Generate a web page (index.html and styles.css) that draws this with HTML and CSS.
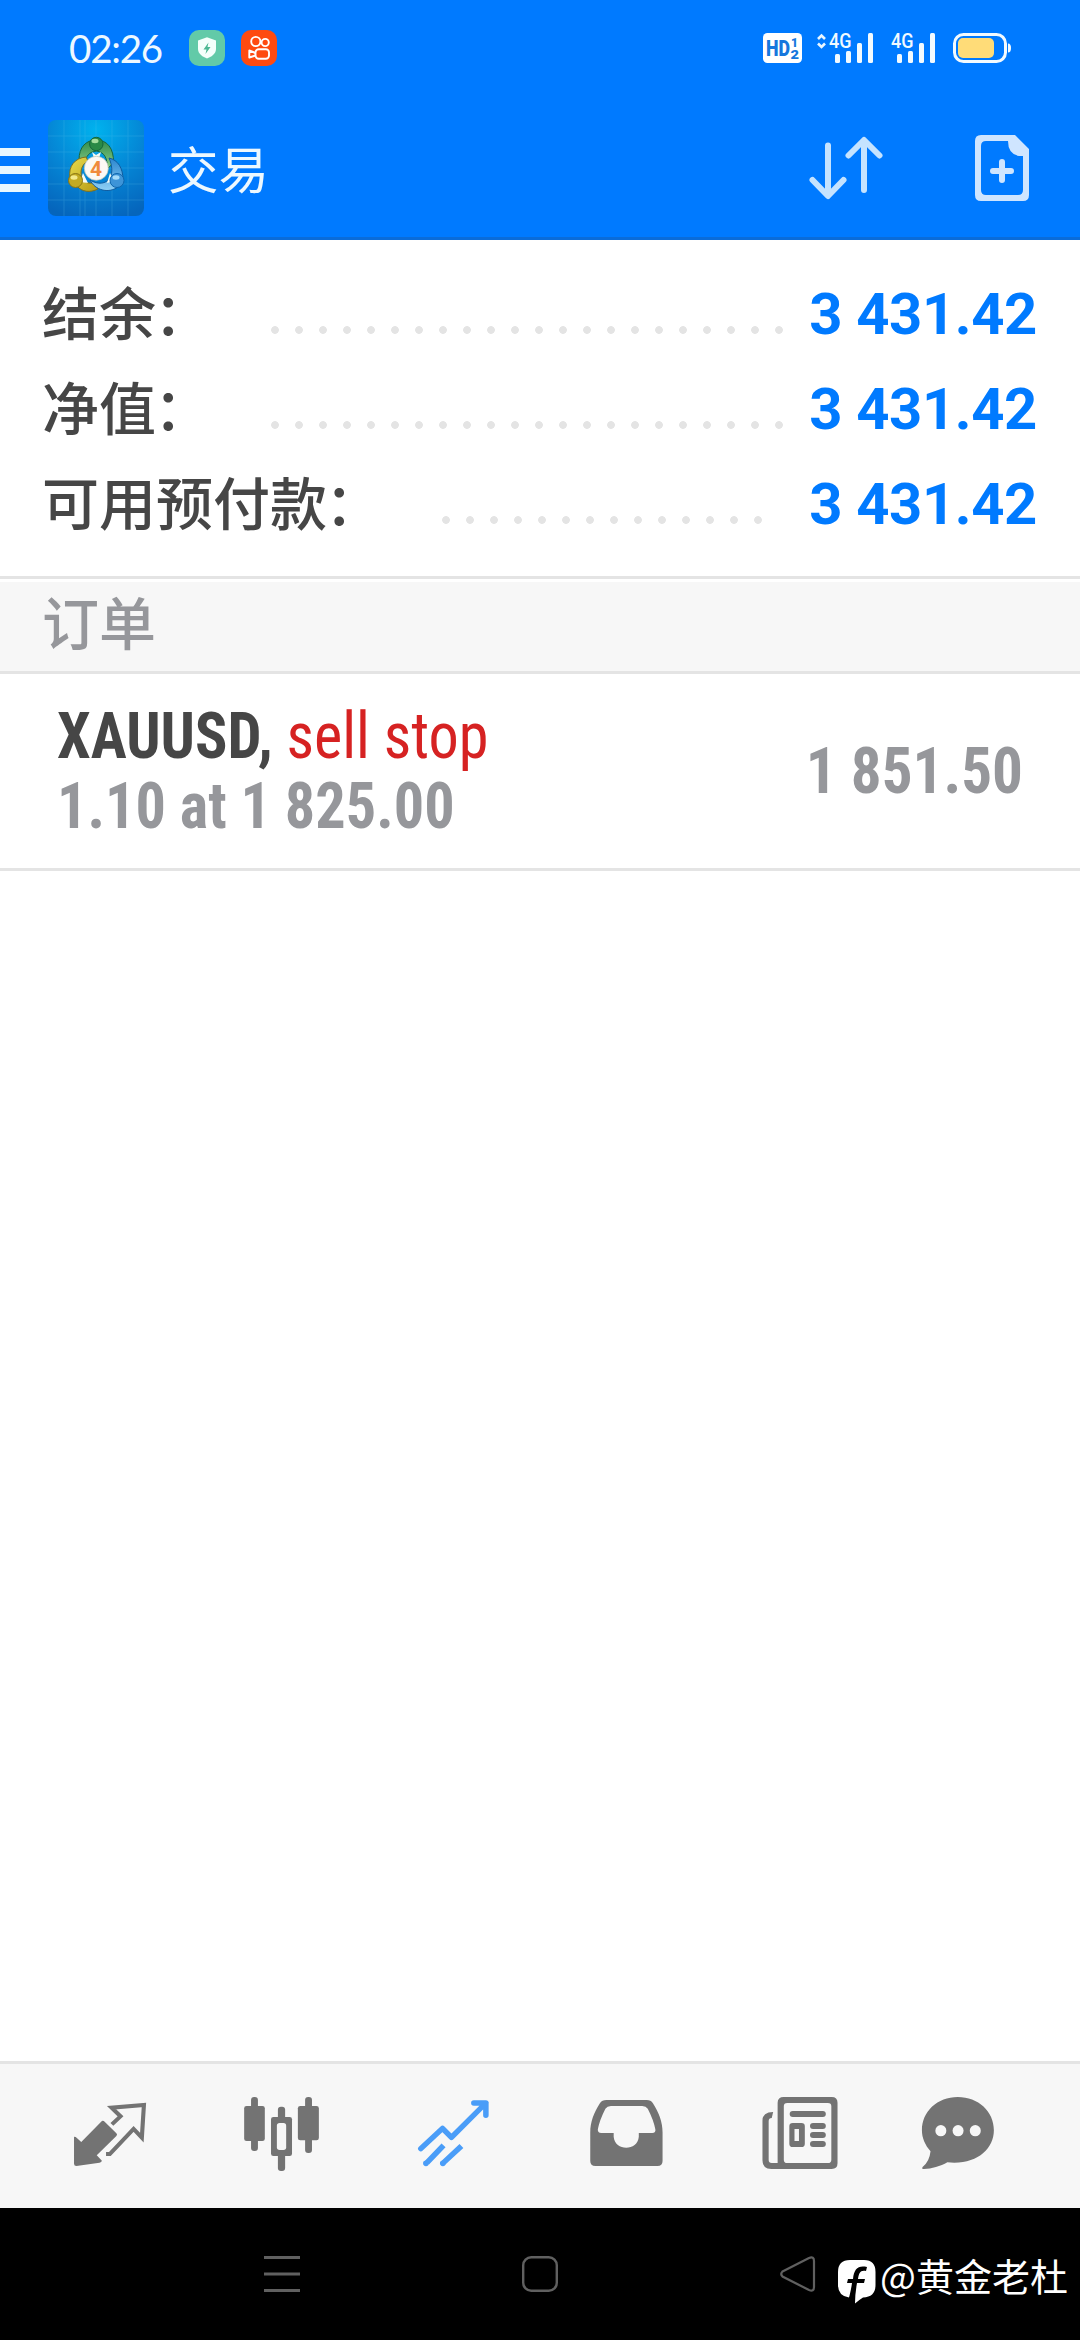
FILE: index.html
```html
<!DOCTYPE html>
<html lang="zh-CN">
<head>
<meta charset="utf-8">
<title>交易</title>
<link rel="stylesheet" href="styles.css">
</head>
<body>
<div class="screen">
  <header class="header">
    <div class="status">
      <span class="clock">02:26</span>
      <svg class="chip" viewBox="0 0 36 36"><rect width="36" height="36" rx="10" fill="#62caa8"/><path d="M18 7.300L27 10.500V19C27 24 22 27 18 28.500C14 27 9 24 9 19V10.500Z" fill="#f4fffb"/><path d="M19.500 12.500L14.500 19.500H17.500L16.500 24L21.500 17H18.500Z" fill="#4bb893"/></svg>
      <svg class="chip" viewBox="0 0 36 36"><rect width="36" height="36" rx="10" fill="#fe4a10"/><g fill="none" stroke="#fff" stroke-width="1.900"><circle cx="14.800" cy="11.500" r="4.600"/><circle cx="24.200" cy="12.500" r="3.600"/><rect x="14.500" y="19.200" width="13.500" height="9.600" rx="3.200"/><path d="M14.500 23L8.300 20.500V27.500L14.500 25.500" stroke-linejoin="round"/></g></svg>
      <svg class="signals" viewBox="763 30 250 36">
        <rect x="763" y="33" width="39" height="30" rx="4.500" fill="#fff"/>
        <g class="mini-bold" fill="#1677dd"><text x="766" y="56" font-size="21.500" textLength="24" lengthAdjust="spacingAndGlyphs">HD</text><text x="791" y="46.500" font-size="13" textLength="7" lengthAdjust="spacingAndGlyphs">1</text><text x="790.500" y="58.500" font-size="13" textLength="8.500" lengthAdjust="spacingAndGlyphs">2</text></g>
        <path d="M818 39L821.500 35.500L825 39M818 43.500L821.500 47L825 43.500" fill="none" stroke="#e9f6ff" stroke-width="2.600"/>
        <g class="mini" fill="#f2faff"><text x="829" y="48" font-size="20.500" textLength="22.500" lengthAdjust="spacingAndGlyphs">4G</text><text x="891" y="48" font-size="20.500" textLength="22.500" lengthAdjust="spacingAndGlyphs">4G</text></g>
        <g fill="#f2faff"><rect x="835" y="54" width="5" height="9" rx="1.500"/><rect x="846" y="51" width="5" height="12" rx="1.500"/><rect x="857" y="43" width="5" height="20" rx="1.500"/><rect x="868" y="33" width="5" height="30" rx="1.500"/><rect x="897" y="54" width="5" height="9" rx="1.500"/><rect x="908" y="51" width="5" height="12" rx="1.500"/><rect x="919" y="43" width="5" height="20" rx="1.500"/><rect x="930" y="33" width="5" height="30" rx="1.500"/><path d="M1008 43.500Q1011 43.500 1011 48Q1011 52.500 1008 52.500Z"/></g>
        <rect x="954.500" y="34.500" width="51" height="27" rx="9" fill="none" stroke="#f2faff" stroke-width="3"/>
        <rect x="958" y="38" width="36" height="20" rx="5" fill="#ffdc78"/>
      </svg>
    </div>
    <div class="toolbar">
      <svg class="menu" viewBox="0 0 30 44" fill="#e8f8ff"><path d="M0 0H30V8H0ZM0 18H30V26H0ZM0 36H30V44H0Z"/></svg>
      <svg class="app-icon" viewBox="0 0 96 96">
        <defs>
          <radialGradient id="sky" cx=".5" cy=".1" r=".95"><stop offset="0" stop-color="#00b2ee"/><stop offset=".55" stop-color="#0584d4"/><stop offset="1" stop-color="#0565bc"/></radialGradient>
          <linearGradient id="green" x2="0" y2="1"><stop offset="0" stop-color="#2f8a4a"/><stop offset="1" stop-color="#8fd28c"/></linearGradient>
          <linearGradient id="gold" x2="1" y2="1"><stop offset="0" stop-color="#e9dc4c"/><stop offset="1" stop-color="#b59a16"/></linearGradient>
          <linearGradient id="blue" x2="0" y2="1"><stop offset="0" stop-color="#2a86cf"/><stop offset="1" stop-color="#8fd0f5"/></linearGradient>
        </defs>
        <rect width="96" height="96" rx="8" fill="url(#sky)"/>
        <path d="M16 0V96M32 0V96M37 0V96M48 0V96M64 0V96M80 0V96M0 16H96M0 32H96M0 48H96M0 64H96M0 80H96" stroke="#5fc4ee" stroke-width=".8" opacity=".28"/>
        <path d="M31 40C31 27 38 20 48.300 20C59 20 66 28 65.500 43L59 49C60 38 56 32 48.500 31C41 32 38 36 37 43Z" fill="url(#green)" stroke="#17663c"/>
        <path d="M38 37C27 38 20 46 22 58L29 66C34 72 42 73 50 69L44 63C38 64 33 60 33 53C33 47 36 43 40 41Z" fill="url(#gold)" stroke="#80701c"/>
        <path d="M61 38C70 40 75 48 75 60L70 67C60 74 47 70 42 60C50 65 58 64 62 58C65 52 64 45 61 38Z" fill="url(#blue)" stroke="#105b9e"/>
        <path d="M44 32L48 35L53 32L51 38H46ZM35 53L32 62L40 63ZM62 53L66 61L59 63Z" fill="#f6fbf4"/>
        <circle cx="48.300" cy="24" r="6.700" fill="#298946" stroke="#14653a"/><circle cx="27.500" cy="60.500" r="7" fill="#c2aa22" stroke="#887414"/><circle cx="69" cy="60.500" r="7" fill="#3d94d8" stroke="#0d65ad"/>
        <ellipse cx="47" cy="21" rx="3.500" ry="2.200" fill="#a3dc9c"/><ellipse cx="26" cy="57.500" rx="3.500" ry="2.200" fill="#f3e98b"/><ellipse cx="68" cy="57.500" rx="3.500" ry="2.200" fill="#a6dcfa"/>
        <circle cx="48.300" cy="48.300" r="12" fill="#fcf9f5" stroke="#b9c3b5" stroke-width=".7"/>
        <text class="four" x="48" y="56" text-anchor="middle">4</text>
      </svg>
      <h1 class="title">交易</h1>
      <svg class="sort" viewBox="0 0 74 64" fill="none" stroke="#c5e3ff" stroke-width="6" stroke-linecap="round" stroke-linejoin="round"><path d="M19 9.500V59.500M3.500 44L19 60L34.500 44M55 54V4.500M39.500 19.500L55 4L70.500 19.500"/></svg>
      <svg class="new" viewBox="0 0 54 66"><path d="M6 0H40L54 14V60Q54 66 48 66H6Q0 66 0 60V6Q0 0 6 0ZM11 6Q6 6 6 11V55Q6 60 11 60H43Q48 60 48 55V21H44Q33 19 33 6Z" fill="#cfe5ff" fill-rule="evenodd"/><path d="M27 27V45M18 36H36" stroke="#cfe5ff" stroke-width="6" stroke-linecap="round"/></svg>
    </div>
  </header>

  <main class="content">
    <dl class="summary">
      <div class="row"><dt>结余<span class="colon">：</span></dt><dd class="leader"></dd><dd class="amount">3 431.42</dd></div>
      <div class="row"><dt>净值<span class="colon">：</span></dt><dd class="leader"></dd><dd class="amount">3 431.42</dd></div>
      <div class="row"><dt>可用预付款<span class="colon">：</span></dt><dd class="leader short"></dd><dd class="amount">3 431.42</dd></div>
    </dl>
    <h2 class="section">订单</h2>
    <article class="order">
      <div class="order-info">
        <div class="order-title"><b>XAUUSD,</b> <span class="sell">sell stop</span></div>
        <div class="order-detail">1.10 at 1 825.00</div>
      </div>
      <div class="order-price">1 851.50</div>
    </article>
  </main>

  <nav class="tabs">
    <svg viewBox="188.800 153 261.400 270" preserveAspectRatio="none"><path d="M296 243Q300 241 304 245L338 280Q342 284 338 288L281 346L296 362Q295 367 289 368L222 378Q215 378 215 371V290L220 291L236 306Z" fill="#737373"/><path d="M325 253L350 229L324 203L418 195L412 293L388 267L319 342H308" fill="none" stroke="#737373" stroke-width="12"/></svg>
    <svg viewBox="685.300 153 261.400 270" preserveAspectRatio="none" fill="#737373"><rect x="729" y="171" width="20" height="162" rx="9"/><rect x="709" y="198" width="60" height="105" rx="7"/><rect x="886" y="171" width="20" height="168" rx="9"/><rect x="865" y="198" width="61" height="103" rx="7"/><rect x="807" y="200" width="21" height="193" rx="9"/><rect x="787" y="231" width="61" height="117" rx="7"/><rect x="804" y="249" width="27" height="81" rx="8" fill="#f7f7f7"/></svg>
    <svg viewBox="1187.700 153 261.400 270" preserveAspectRatio="none" fill="none" stroke="#4a9df8" stroke-width="16"><path d="M1222 326L1285 265L1311 292L1411 189M1376 189H1411V226" stroke-linecap="round" stroke-linejoin="round"/><path d="M1288 316L1240 368M1340 318L1288 368"/><path d="M1237 370h.1M1286 370h.1" stroke-width="17" stroke-linecap="round"/></svg>
    <svg viewBox="119.100 153 261.400 270" preserveAspectRatio="none"><path d="M193 180H310Q322 180 328 190C345 218 356 245 356 278V363Q356 378 341 378H161Q146 378 146 363V278C146 245 157 218 174 190Q180 180 193 180ZM206 198Q195 198 190 206Q173 240 168 268Q167 279 178 279H214V290C217 334 284 334 287 290V279H326Q337 279 335 268Q330 240 313 206Q308 198 297 198Z" fill="#737373" fill-rule="evenodd"/></svg>
    <svg viewBox="624.300 153 261.400 270" preserveAspectRatio="none" fill="#737373"><path fill-rule="evenodd" d="M708 171H847Q864 171 864 188V370Q864 387 847 387H672Q646 387 646 361V242Q646 216 677 216L673 234Q664 234 664 243V360Q664 369 673 369H690V188Q690 171 708 171ZM718 189Q708 189 708 199V359Q708 369 718 369H836Q846 369 846 359V199Q846 189 836 189Z"/><rect x="725" y="213" width="105" height="18" rx="9"/><path fill-rule="evenodd" d="M734 249H759Q769 249 769 259V311Q769 321 759 321H734Q724 321 724 311V259Q724 249 734 249ZM739 267V303H752V267Z"/><rect x="784" y="249" width="46" height="18" rx="9"/><rect x="784" y="276" width="46" height="18" rx="9"/><rect x="784" y="303" width="46" height="18" rx="9"/></svg>
    <svg viewBox="1083.100 153 261.400 270" preserveAspectRatio="none"><path d="M1213 171C1273 171 1318 214 1318 271C1318 329 1266 376 1183 367C1163 379 1137 387 1115 387Q1107 387 1111 381Q1131 365 1134 334C1118 315 1109 294 1109 271C1109 214 1154 171 1213 171Z" fill="#737373"/><g fill="#f7f7f7"><ellipse cx="1164" cy="272" rx="16" ry="17"/><ellipse cx="1214" cy="272" rx="16" ry="17"/><ellipse cx="1264" cy="272" rx="16" ry="17"/></g></svg>
  </nav>

  <footer class="system">
    <svg class="recents" viewBox="0 0 36 36"><path d="M0 1.500H36M0 18H36M0 34.500H36" stroke="#606060" stroke-width="3"/></svg>
    <svg class="home" viewBox="0 0 36 36"><rect x="1.200" y="1.200" width="33.600" height="33.600" rx="8" fill="none" stroke="#606060" stroke-width="2.400"/></svg>
    <svg class="back" viewBox="0 0 36 36"><path d="M2.500 15.500L29 2Q34 0 34 5V31Q34 36 29 34L2.500 20.500Q0 18 2.500 15.500Z" fill="none" stroke="#606060" stroke-width="2.200"/></svg>
    <svg class="brand" viewBox="0 0 38 44"><path d="M12 0H26Q37.500 0 37.500 12V25Q37.500 37 25 37.500Q21 40 17 43.500Q17 34 19 23H26L27 19H20C21 13 22 10 28 11L29 7C20 5 16 9 15 19H10L9 23H14C13 30 12 34 11 37.500Q0 36 0 25V12Q0 0 12 0Z" fill="#fff"/></svg>
    <span class="handle">@黄金老杜</span>
  </footer>
</div>
</body>
</html>
```
FILE: styles.css
```css
* { box-sizing: border-box; }
body { margin: 0; background: #fff; font-family: Roboto, "Noto Sans CJK SC", sans-serif; }
svg { display: block; flex: none; }
h1, h2, dl, dt, dd { margin: 0; font-weight: 500; }
.screen { width: 1080px; height: 2340px; display: flex; flex-direction: column; overflow: hidden; }

.header { height: 240px; background: #007aff; border-bottom: 3px solid #0a6cd9; }
.status { height: 96px; padding-left: 69px; display: flex; align-items: center; }
.clock { width: 120px; font: 400 38.5px/96px Lato, sans-serif; letter-spacing: -1.2px; color: #edf8ff; }
.chip { width: 36px; height: 36px; margin-right: 16px; }
.signals { width: 250px; height: 36px; margin-left: 470px; }
.mini, .mini-bold { font-family: Roboto, sans-serif; font-weight: 500; }
.mini-bold { font-weight: 900; }

.toolbar { height: 144px; display: flex; align-items: center; }
.menu { width: 30px; height: 44px; margin: 4px 18px 0 0; }
.app-icon { width: 96px; height: 96px; }
.four { font: 700 21px Roboto, sans-serif; fill: #f08b3c; }
.title { width: 665px; padding: 0 0 2px 24px; font: 400 50.5px/72px "Noto Sans CJK SC", sans-serif; color: #ecf8ff; }
.sort { width: 74px; height: 64px; }
.new { width: 54px; height: 66px; margin-left: 92px; }

.content { flex: 1; }
.summary { height: 339px; padding: 24px 43px 0 42px; border-bottom: 3px solid #e4e4e4; }
.row { height: 95px; display: flex; align-items: center; color: #464646; }
.row dt { font: 500 57px/95px "Noto Sans CJK SC", sans-serif; white-space: nowrap; padding-bottom: 2px; }
.colon { margin-left: -2px; }
.leader { width: 528px; height: 8px; margin: 37px 0 0 52px; background: radial-gradient(circle, #e4e4e4 3.5px, transparent 4.2px) 0 0 / 24px 8px repeat-x; }
.leader.short { width: 336px; }
.amount { margin-left: auto; padding-top: 5px; font-size: 58px; font-weight: 700; line-height: 95px; letter-spacing: -.4px; color: #007aff; white-space: pre; }
.section { height: 95px; padding-left: 42px; border-top: 3px solid #fff; border-bottom: 3px solid #e4e4e4; background: #f7f7f7; color: #96979b; font: 500 57px/77px "Noto Sans CJK SC", sans-serif; }
.order { height: 197px; padding: 27px 57px 0; display: flex; justify-content: space-between; border-bottom: 3px solid #e4e4e4; font-family: "Roboto Condensed", Roboto, sans-serif; font-stretch: 75%; font-size: 65px; line-height: 70px; white-space: nowrap; }
.order-info { transform: scaleX(.927); transform-origin: left; }
.order-title { color: #464646; }
.sell { color: #d62222; }
.order-detail, .order-price { color: #96979b; font-weight: 700; }
.order-price { line-height: 140px; transform: scaleX(.94); transform-origin: right; }

.tabs { height: 147px; padding: 27px 0 0 65px; border-top: 3px solid #e4e4e4; background: #f7f7f7; display: grid; grid-template-columns: 171px 173px 172px 174px 158px 90px; }
.tabs svg { width: 90px; height: 90px; }

.system { height: 132px; padding: 48px 0 0 264px; display: flex; align-items: flex-start; background: #000; }
.recents, .home, .back { width: 36px; height: 36px; }
.home, .back { margin-left: 222px; }
.brand { width: 38px; height: 44px; margin: 4px 4px 0 22px; }
.handle { font: 400 38px/38px "Noto Sans CJK SC", sans-serif; color: #fff; white-space: nowrap; }
```
